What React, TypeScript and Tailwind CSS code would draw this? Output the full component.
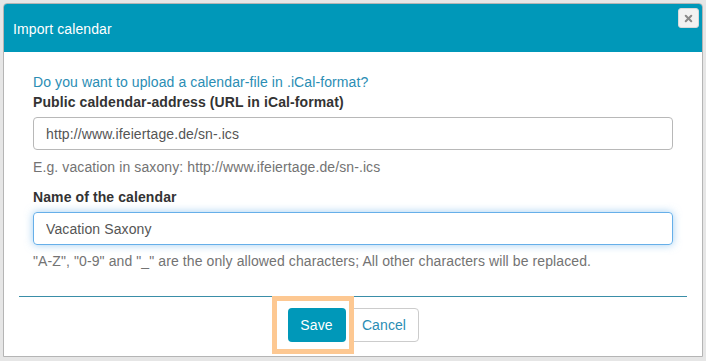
import { X } from "lucide-react";

export default function App() {
  return (
    <div
      className="h-[361px] w-[706px] bg-[#e6e6e6] pt-[3px] pl-[3px] text-[14px] leading-[20px] tracking-[0.1px]"
      style={{ fontFamily: '"Liberation Sans", Arial, sans-serif' }}
    >
      <div className="relative h-[354px] w-[700px] overflow-hidden rounded-t-[4px] border border-[#b5b5b5] bg-white">
        {/* header */}
        <div className="flex h-[48px] items-center bg-[#0098b9] pl-[9px] pt-[2px] text-white">
          Import calendar
        </div>
        <button className="absolute right-[3px] top-[4px] flex h-[20px] w-[21px] items-center justify-center rounded-[3px] border border-[#d9d9d9] bg-[#f2f2f2] text-[#8a8a8a]">
          <X className="h-[11px] w-[11px]" strokeWidth={4.5} />
        </button>

        {/* body */}
        <div className="pl-[29px] pr-[29px] pt-[20px]">
          <p className="text-[#2a8db4]">Do you want to upload a calendar-file in .iCal-format?</p>
          <label className="block font-bold text-[#333]">Public caldendar-address (URL in iCal-format)</label>
          <input
            readOnly
            value="http://www.ifeiertage.de/sn-.ics"
            className="mt-[5px] block h-[33px] w-full rounded-[4px] border border-[#b8b8b8] px-[12px] text-[#555] outline-none"
          />
          <p className="mt-[7px] text-[#737373]">E.g. vacation in saxony: http://www.ifeiertage.de/sn-.ics</p>

          <label className="mt-[10px] block font-bold text-[#333]">Name of the calendar</label>
          <input
            readOnly
            value="Vacation Saxony"
            className="mt-[5px] block h-[33px] w-full rounded-[4px] border border-[#66afe9] px-[12px] text-[#555] shadow-[0_0_8px_rgba(102,175,233,0.6)] outline-none"
          />
          <p className="mt-[6px] text-[#737373]">
            "A-Z", "0-9" and "_" are the only allowed characters; All other characters will be replaced.
          </p>
        </div>

        {/* footer */}
        <div className="mx-[15px] mt-[25px] border-t border-[#3a8ea8]" />
        <div className="flex justify-center gap-[4px] pt-[11px]">
          <div className="relative">
            <button className="h-[34px] w-[58px] rounded-[4px] bg-[#0098b9] text-white">Save</button>
            <span className="pointer-events-none absolute -bottom-[12px] -left-[16px] -right-[8px] -top-[12px] z-10 border-[5px] border-[#fdc892]" />
          </div>
          <button className="h-[34px] w-[69px] rounded-[4px] border border-[#ccc] bg-white text-[#2a8db4]">
            Cancel
          </button>
        </div>
      </div>
    </div>
  );
}
